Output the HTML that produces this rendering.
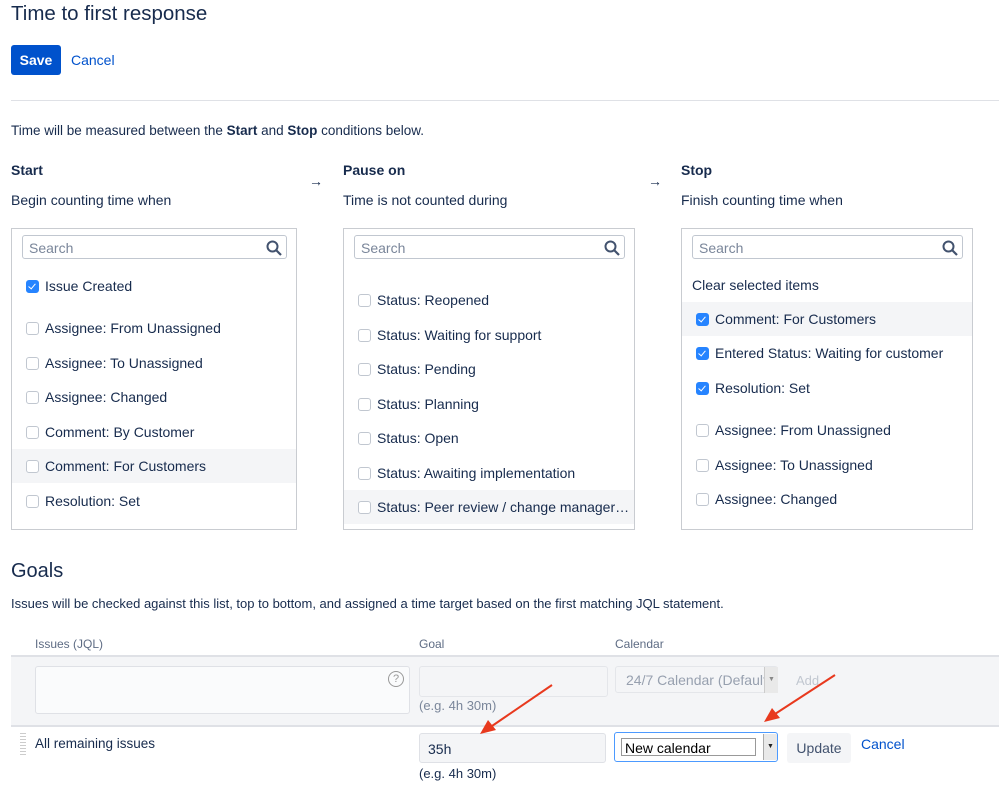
<!DOCTYPE html>
<html><head><meta charset="utf-8"><style>
body{margin:0;width:999px;height:790px;background:#fff;font-family:"Liberation Sans",sans-serif;color:#172b4d;position:relative;overflow:hidden}
.a{position:absolute;white-space:nowrap}
.box{position:absolute;border:1px solid #c9ccd1;background:#fff;overflow:hidden}
.srch{position:absolute;left:10px;top:6px;height:24px;border:1px solid #c1c7d0;border-radius:3px;font-size:14px;color:#7a869a;line-height:24px;padding-left:6px;box-sizing:border-box}
.srch svg{position:absolute;right:4px;top:4px}
.it{position:absolute;left:0;right:0;height:34px;font-size:14px;line-height:34px}
.it.h{background:#f4f5f7}
.cb{position:absolute;left:14px;top:11px;width:11px;height:11px;border:1px solid #c1c7d0;border-radius:3px;background:#fff}
.cb.on{background:#2684ff;border-color:#2684ff}
.cb.on:after{content:"";position:absolute;left:3px;top:1px;width:3px;height:6px;border:solid #fff;border-width:0 1.5px 1.5px 0;transform:rotate(40deg)}
.it span{position:absolute;left:33px}
</style></head><body>
<div class="a" style="left:11px;top:2px;font-size:20.5px">Time to first response</div>
<div class="a" style="left:11px;top:45px;width:50px;height:30px;background:#0052cc;border-radius:3px;color:#fff;font-weight:bold;font-size:14px;line-height:30px;text-align:center">Save</div>
<div class="a" style="left:71px;top:52px;font-size:14px;color:#0052cc">Cancel</div>
<div class="a" style="left:11px;top:100px;width:988px;height:1px;background:#dfe1e6"></div>
<div class="a" style="left:11px;top:123px;font-size:13.5px">Time will be measured between the <b>Start</b> and <b>Stop</b> conditions below.</div>
<div class="a" style="left:11px;top:162px;font-size:14px;font-weight:bold">Start</div>
<div class="a" style="left:11px;top:192px;font-size:14px">Begin counting time when</div>
<div class="a" style="left:309px;top:173px;font-size:14px">→</div>
<div class="a" style="left:343px;top:162px;font-size:14px;font-weight:bold">Pause on</div>
<div class="a" style="left:343px;top:192px;font-size:14px">Time is not counted during</div>
<div class="a" style="left:648px;top:173px;font-size:14px">→</div>
<div class="a" style="left:681px;top:162px;font-size:14px;font-weight:bold">Stop</div>
<div class="a" style="left:681px;top:192px;font-size:14px">Finish counting time when</div>

<div class="box" style="left:11px;top:228px;width:284px;height:300px">
<div class="srch" style="width:265px">Search<svg width="16" height="16" viewBox="0 0 16 16"><circle cx="6.5" cy="6.5" r="5" fill="none" stroke="#42526e" stroke-width="2"/><path d="M10 10l5 5" stroke="#42526e" stroke-width="2.2"/></svg></div>
<div class="it" style="top:40px"><div class="cb on"></div><span>Issue Created</span></div>
<div class="it" style="top:82px"><div class="cb"></div><span>Assignee: From Unassigned</span></div>
<div class="it" style="top:117px"><div class="cb"></div><span>Assignee: To Unassigned</span></div>
<div class="it" style="top:151px"><div class="cb"></div><span>Assignee: Changed</span></div>
<div class="it" style="top:186px"><div class="cb"></div><span>Comment: By Customer</span></div>
<div class="it h" style="top:220px"><div class="cb"></div><span>Comment: For Customers</span></div>
<div class="it" style="top:255px"><div class="cb"></div><span>Resolution: Set</span></div>
</div>

<div class="box" style="left:343px;top:228px;width:290px;height:300px">
<div class="srch" style="width:271px">Search<svg width="16" height="16" viewBox="0 0 16 16"><circle cx="6.5" cy="6.5" r="5" fill="none" stroke="#42526e" stroke-width="2"/><path d="M10 10l5 5" stroke="#42526e" stroke-width="2.2"/></svg></div>
<div class="it" style="top:54px"><div class="cb"></div><span>Status: Reopened</span></div>
<div class="it" style="top:89px"><div class="cb"></div><span>Status: Waiting for support</span></div>
<div class="it" style="top:123px"><div class="cb"></div><span>Status: Pending</span></div>
<div class="it" style="top:158px"><div class="cb"></div><span>Status: Planning</span></div>
<div class="it" style="top:192px"><div class="cb"></div><span>Status: Open</span></div>
<div class="it" style="top:227px"><div class="cb"></div><span>Status: Awaiting implementation</span></div>
<div class="it h" style="top:261px"><div class="cb"></div><span>Status: Peer review / change manager…</span></div>
</div>

<div class="box" style="left:681px;top:228px;width:290px;height:300px">
<div class="srch" style="width:271px">Search<svg width="16" height="16" viewBox="0 0 16 16"><circle cx="6.5" cy="6.5" r="5" fill="none" stroke="#42526e" stroke-width="2"/><path d="M10 10l5 5" stroke="#42526e" stroke-width="2.2"/></svg></div>
<div class="a" style="left:10px;top:48px;font-size:14px">Clear selected items</div>
<div class="it h" style="top:73px"><div class="cb on"></div><span>Comment: For Customers</span></div>
<div class="it" style="top:107px"><div class="cb on"></div><span>Entered Status: Waiting for customer</span></div>
<div class="it" style="top:142px"><div class="cb on"></div><span>Resolution: Set</span></div>
<div class="it" style="top:184px"><div class="cb"></div><span>Assignee: From Unassigned</span></div>
<div class="it" style="top:219px"><div class="cb"></div><span>Assignee: To Unassigned</span></div>
<div class="it" style="top:253px"><div class="cb"></div><span>Assignee: Changed</span></div>
</div>

<div class="a" style="left:11px;top:560px;font-size:20px">Goals</div>
<div class="a" style="left:11px;top:596px;font-size:13px">Issues will be checked against this list, top to bottom, and assigned a time target based on the first matching JQL statement.</div>
<div class="a" style="left:35px;top:637px;font-size:12px;color:#5e6c84">Issues (JQL)</div>
<div class="a" style="left:419px;top:637px;font-size:12px;color:#5e6c84">Goal</div>
<div class="a" style="left:615px;top:637px;font-size:12px;color:#5e6c84">Calendar</div>
<div class="a" style="left:11px;top:655px;width:988px;height:68px;background:#f4f5f7;border-top:2px solid #dfe1e6;border-bottom:2px solid #dfe1e6"></div>
<div class="a" style="left:35px;top:666px;width:373px;height:46px;background:#fafbfc;border:1px solid #dfe1e6;border-radius:3px"></div>
<div class="a" style="left:388px;top:671px;width:14px;height:14px;border:1.5px solid #999;border-radius:50%;font-size:11px;line-height:14px;text-align:center;color:#999">?</div>
<div class="a" style="left:419px;top:666px;width:187px;height:29px;background:#f4f5f7;border:1px solid #e4e6ea;border-radius:3px"></div>
<div class="a" style="left:419px;top:698px;font-size:13px;color:#7a869a">(e.g. 4h 30m)</div>
<div class="a" style="left:615px;top:666px;width:163px;height:27px;background:#f4f5f7;border:1px solid #e4e6ea;border-radius:3px;font-size:14px;color:#97a0af;line-height:27px;padding-left:10px;box-sizing:border-box;overflow:hidden">24/7 Calendar (Default</div>
<div class="a" style="left:764px;top:667px;width:13px;height:26px;background:#e9e9e9;border-left:1px solid #ccc;font-size:7px;line-height:26px;text-align:center;color:#888">▼</div>
<div class="a" style="left:796px;top:673px;font-size:13px;color:#c1c7d0">Add</div>

<div class="a" style="left:20px;top:733px;width:6px;height:22px;background:repeating-linear-gradient(#ccc 0 1px,transparent 1px 3px)"></div>
<div class="a" style="left:35px;top:736px;font-size:13.5px">All remaining issues</div>
<div class="a" style="left:419px;top:733px;width:187px;height:30px;background:#f4f5f7;border:1px solid #dfe1e6;border-radius:3px;font-size:14px;line-height:30px;padding-left:8px;box-sizing:border-box">35h</div>
<div class="a" style="left:419px;top:766px;font-size:13px">(e.g. 4h 30m)</div>
<div class="a" style="left:614px;top:732px;width:164px;height:30px;border:1.5px solid #4c9aff;border-radius:3px;box-sizing:border-box;background:#fff"></div>
<div class="a" style="left:621px;top:738px;width:135px;height:18px;border:1px solid #999;font-size:14px;line-height:18px;padding-left:3px;box-sizing:border-box;color:#000">New calendar</div>
<div class="a" style="left:763px;top:734px;width:13px;height:26px;background:#e9e9e9;border-left:1px solid #aaa;font-size:7px;line-height:26px;text-align:center;color:#222">▼</div>
<div class="a" style="left:787px;top:733px;width:64px;height:30px;background:#f4f5f7;border-radius:3px;font-size:14px;line-height:30px;text-align:center;color:#42526e">Update</div>
<div class="a" style="left:861px;top:736px;font-size:14px;color:#0052cc">Cancel</div>

<svg class="a" style="left:0;top:0" width="999" height="790"><g stroke="#e8391e" stroke-width="2" fill="#e8391e">
<line x1="552" y1="685" x2="492" y2="726"/><polygon points="480,734 488,720 496,730" stroke="none"/>
<line x1="835" y1="675" x2="775" y2="714"/><polygon points="764,722 772,708 780,718" stroke="none"/></g></svg>
</body></html>
